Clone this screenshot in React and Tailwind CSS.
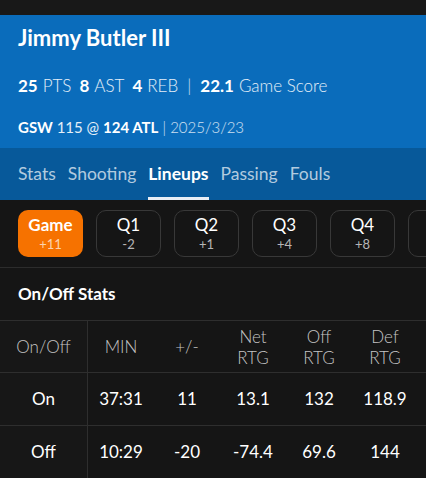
import React from 'react';

const tabs = ['Stats', 'Shooting', 'Lineups', 'Passing', 'Fouls'];

const periods = [
  { label: 'Game', diff: '+11', active: true },
  { label: 'Q1', diff: '-2' },
  { label: 'Q2', diff: '+1' },
  { label: 'Q3', diff: '+4' },
  { label: 'Q4', diff: '+8' },
  { label: '', diff: '' },
];

const columns = [['MIN'], ['+/-'], ['Net', 'RTG'], ['Off', 'RTG'], ['Def', 'RTG']];

const rows = [
  { name: 'On', values: ['37:31', '11', '13.1', '132', '118.9'] },
  { name: 'Off', values: ['10:29', '-20', '-74.4', '69.6', '144'] },
];

export default function App() {
  return (
    <div
      className="w-[426px] h-[478px] overflow-hidden bg-[#151515] text-white"
      style={{ fontFamily: 'Lato, "Open Sans", sans-serif' }}
    >
      <div className="h-[15px] bg-[#181818]" />

      {/* player header */}
      <div className="bg-[#0a6cbb] px-[18px] pt-[9px] pb-[11px]">
        <h1 className="text-[22px] leading-[28px] font-bold">Jimmy Butler III</h1>
        <div className="mt-[22px] text-[17px] leading-[24px] flex items-center">
          <span className="font-bold">25</span>
          <span className="ml-[5px] font-light text-white/90">PTS</span>
          <span className="ml-[8px] font-bold">8</span>
          <span className="ml-[5px] font-light text-white/90">AST</span>
          <span className="ml-[8px] font-bold">4</span>
          <span className="ml-[5px] font-light text-white/90">REB</span>
          <span className="mx-[9px] font-light text-white/80">|</span>
          <span className="font-bold">22.1</span>
          <span className="ml-[5px] font-light text-white/90">Game Score</span>
        </div>
        <div className="mt-[19px] text-[15px] leading-[20px]">
          <span className="font-bold">GSW</span>
          <span className="text-white/90"> 115 @ </span>
          <span className="font-bold">124 ATL</span>
          <span className="font-light text-white/80"> | 2025/3/23</span>
        </div>
      </div>

      {/* tabs */}
      <div className="bg-[#07599a] h-[52px] px-[18px] flex gap-[12px]">
        {tabs.map((t) => (
          <div
            key={t}
            className={
              'relative flex items-center text-[17.5px] leading-[24px] ' +
              (t === 'Lineups' ? 'font-bold text-white' : 'text-white/70')
            }
          >
            {t}
            {t === 'Lineups' && (
              <span className="absolute left-0 right-0 bottom-0 h-[3px] bg-[#e8eef5]" />
            )}
          </div>
        ))}
      </div>

      {/* period selector */}
      <div className="py-[10px] pl-[18px] flex gap-[13px] border-b border-[#2c2c2c] overflow-hidden">
        {periods.map((p, i) => (
          <div
            key={i}
            className={
              'shrink-0 w-[65px] h-[47px] rounded-[10px] flex flex-col items-center justify-center gap-[1px] ' +
              (p.active ? 'bg-[#f67200]' : 'border border-[#383838]')
            }
          >
            <span className={'text-[17px] leading-[20px] ' + (p.active ? 'font-bold' : '')}>
              {p.label}
            </span>
            <span className="text-[13px] leading-[17px] text-white/70">{p.diff}</span>
          </div>
        ))}
      </div>

      <div className="h-[52px] px-[18px] flex items-center">
        <h2 className="text-[17px] leading-[24px] font-bold">On/Off Stats</h2>
      </div>

      {/* on/off table */}
      <div className="flex border-t border-[#2e2e2e]">
        <div className="w-[88px] shrink-0 border-r border-[#2e2e2e] bg-[#171717]">
          <div className="h-[52px] flex items-center justify-center border-b border-[#2e2e2e] text-[17px] leading-[21px] font-light text-[#c4c4c4]">
            On/Off
          </div>
          {rows.map((r) => (
            <div
              key={r.name}
              className="h-[53px] flex items-center justify-center border-b border-[#2e2e2e] text-[17px] leading-[24px]"
            >
              {r.name}
            </div>
          ))}
        </div>
        <div className="flex-1 overflow-hidden">
          <div className="flex h-[52px] border-b border-[#2e2e2e]">
            {columns.map((c) => (
              <div
                key={c.join(' ')}
                className="w-[66px] shrink-0 flex flex-col items-center justify-center text-[17px] leading-[21px] font-light text-[#c4c4c4]"
              >
                {c.map((line) => (
                  <span key={line}>{line}</span>
                ))}
              </div>
            ))}
          </div>
          {rows.map((r) => (
            <div key={r.name} className="flex h-[53px] border-b border-[#2e2e2e]">
              {r.values.map((v, i) => (
                <div
                  key={i}
                  className="w-[66px] shrink-0 flex items-center justify-center text-[17px] leading-[24px]"
                >
                  {v}
                </div>
              ))}
            </div>
          ))}
          <div className="h-[4px] bg-[#4a4a4a]" />
        </div>
      </div>
    </div>
  );
}
